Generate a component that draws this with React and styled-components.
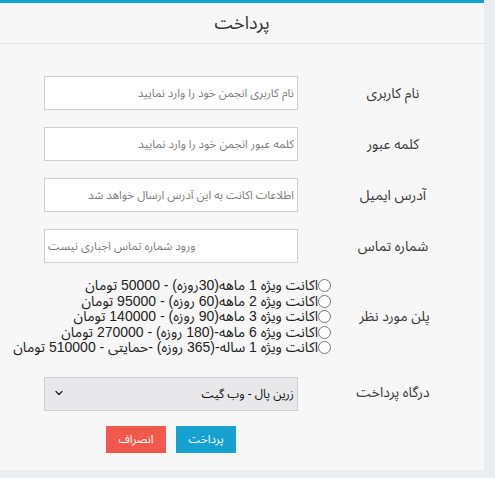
import React from "react";
import styled, { createGlobalStyle } from "styled-components";
import { ChevronDown } from "lucide-react";

const Global = createGlobalStyle`
  html, body { margin: 0; padding: 0; }
  body {
    background: #ecedef;
    font-family: "Noto Sans Arabic", "Noto Sans", "DejaVu Sans", sans-serif;
    overflow: hidden;
  }
`;

const Page = styled.div`
  width: 495px;
  height: 478px;
  display: flex;
  flex-direction: column;
  align-items: flex-start;
`;

const Panel = styled.div`
  width: 484px;
  background: #f7f7f7;
  border-top: 3px solid #17a2d3;
  direction: rtl;
`;

const Header = styled.div`
  height: 40px;
  border-bottom: 1px solid #e2e2e2;
  display: flex;
  align-items: center;
  justify-content: center;
  font-size: 18px;
  color: #333;
`;

const Form = styled.form`
  display: flex;
  flex-direction: column;
  padding: 32px 26px 17px 0;
`;

const Row = styled.div`
  display: grid;
  grid-template-columns: ${(p) => (p.$tight ? "127px 260px" : "130px 254px")};
  column-gap: ${(p) => (p.$tight ? "0" : "30px")};
  align-items: center;
  margin-bottom: ${(p) => p.$mb ?? 17}px;
`;

const Label = styled.label`
  text-align: center;
  font-size: 14px;
  color: #3a3a3a;
`;

const Input = styled.input`
  box-sizing: border-box;
  width: 254px;
  height: 34px;
  border: 1px solid #cfcfcf;
  background: #fff;
  padding: 0 3px;
  font-family: inherit;
  font-size: 11.6px;
  text-align: ${(p) => (p.$left ? "left" : "right")};
  direction: rtl;
  outline: none;
  &::placeholder { color: #7d7d7d; }
`;

const RadioList = styled.div`
  display: flex;
  flex-direction: column;
  white-space: nowrap;
`;

const RadioLine = styled.label`
  display: flex;
  align-items: center;
  height: 15.5px;
  line-height: 15.5px;
  font-family: "Liberation Sans", "Noto Sans Arabic", sans-serif;
  font-size: 14px;
  color: #222;
`;

const Radio = styled.input.attrs({ type: "radio" })`
  margin: 0;
  width: 13px;
  height: 13px;
`;

const SelectWrap = styled.div`
  position: relative;
  width: 254px;
  height: 34px;
`;

const Select = styled.select`
  appearance: none;
  box-sizing: border-box;
  width: 100%;
  height: 100%;
  background: #e8e8eb;
  border: 1px solid #cfcfcf;
  border-radius: 0;
  padding: 0 3px 0 30px;
  font-family: inherit;
  font-size: 12px;
  color: #111;
  direction: rtl;
  outline: none;
`;

const Chevron = styled(ChevronDown)`
  position: absolute;
  left: 9px;
  top: 11px;
  width: 12px;
  height: 12px;
  color: #222;
  pointer-events: none;
`;

const Actions = styled.div`
  display: flex;
  justify-content: center;
  gap: 10px;
`;

const Button = styled.button`
  width: 60px;
  height: 27px;
  border: none;
  border-radius: 0;
  color: #fff;
  font-family: inherit;
  font-size: 11.5px;
  background: ${(p) => (p.$variant === "danger" ? "#f2584c" : "#16a1d0")};
  cursor: pointer;
`;

const plans = [
  "اکانت ویژه 1 ماهه(30روزه) - 50000 تومان",
  "اکانت ویژه 2 ماهه(60 روزه) - 95000 تومان",
  "اکانت ویژه 3 ماهه(90 روزه) - 140000 تومان",
  "اکانت ویژه 6 ماهه-(180 روزه) - 270000 تومان",
  "اکانت ویژه 1 ساله-(365 روزه) -حمایتی - 510000 تومان",
];

export default function App() {
  return (
    <Page>
      <Global />
      <Panel>
        <Header>پرداخت</Header>
        <Form onSubmit={(e) => e.preventDefault()}>
          <Row>
            <Label>نام کاربری</Label>
            <Input placeholder="نام کاربری انجمن خود را وارد نمایید" />
          </Row>
          <Row>
            <Label>کلمه عبور</Label>
            <Input type="password" placeholder="کلمه عبور انجمن خود را وارد نمایید" />
          </Row>
          <Row>
            <Label>آدرس ایمیل</Label>
            <Input placeholder="اطلاعات اکانت به این آدرس ارسال خواهد شد" />
          </Row>
          <Row $mb={15}>
            <Label>شماره تماس</Label>
            <Input $left placeholder="ورود شماره تماس اجباری نیست" />
          </Row>
          <Row $tight $mb={20}>
            <Label>پلن مورد نظر</Label>
            <RadioList>
              {plans.map((p) => (
                <RadioLine key={p}>
                  <Radio name="plan" />
                  {p}
                </RadioLine>
              ))}
            </RadioList>
          </Row>
          <Row $mb={16}>
            <Label>درگاه پرداخت</Label>
            <SelectWrap>
              <Select defaultValue="zarinpal">
                <option value="zarinpal">زرین پال - وب گیت</option>
              </Select>
              <Chevron strokeWidth={2.5} />
            </SelectWrap>
          </Row>
          <Row $mb={0}>
            <span />
            <Actions>
              <Button>پرداخت</Button>
              <Button $variant="danger">انصراف</Button>
            </Actions>
          </Row>
        </Form>
      </Panel>
    </Page>
  );
}
